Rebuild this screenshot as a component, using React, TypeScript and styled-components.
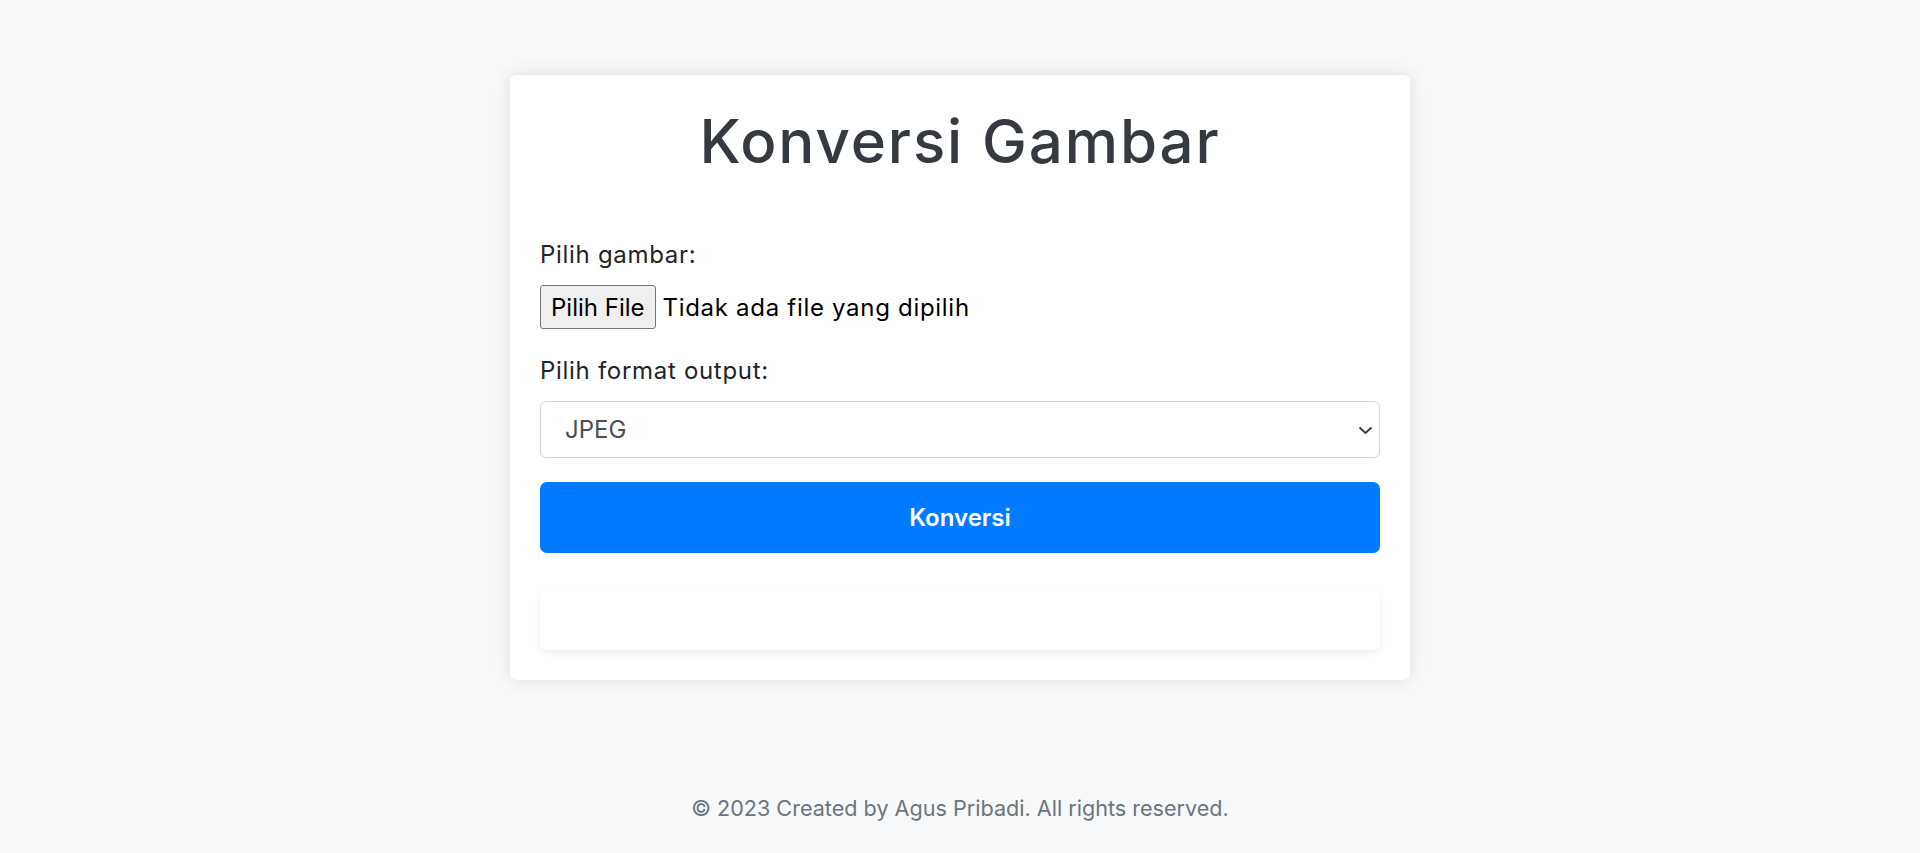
import React from "react";
import styled, { createGlobalStyle } from "styled-components";

const GlobalStyle = createGlobalStyle`
  html, body {
    margin: 0;
    padding: 0;
    background: #f8f9fa;
    font-family: Inter, "Noto Sans", "Liberation Sans", sans-serif;
    color: #212529;
  }
  * { box-sizing: border-box; }
`;

const Page = styled.div`
  min-height: 100vh;
  display: flex;
  flex-direction: column;
  align-items: center;
`;

const Card = styled.main`
  margin-top: 75px;
  width: 900px;
  padding: 30px;
  background: #ffffff;
  border-radius: 7px;
  box-shadow: 0 0 18px rgba(0, 0, 0, 0.12);
  display: flex;
  flex-direction: column;
`;

const Title = styled.h1`
  margin: 0 0 60px;
  font-size: 60px;
  line-height: 72px;
  font-weight: 500;
  letter-spacing: 1.9px;
  text-align: center;
  color: #343a40;
`;

const Field = styled.div`
  display: flex;
  flex-direction: column;
  margin-bottom: 24px;
`;

const Label = styled.label`
  font-size: 24px;
  line-height: 36px;
  letter-spacing: 0.7px;
  color: #212529;
  margin-bottom: 12px;
`;

const FileRow = styled.div`
  display: flex;
  align-items: center;
  gap: 7px;
  height: 44px;
`;

const FileButton = styled.button`
  height: 44px;
  padding: 0 10px;
  border: 1px solid #767676;
  border-radius: 3px;
  background: #efefef;
  color: #000;
  font-family: inherit;
  font-size: 24px;
  cursor: pointer;
`;

const FileName = styled.span`
  font-size: 24px;
  letter-spacing: 0.7px;
  color: #000;
`;

const SelectWrap = styled.div`
  position: relative;
  height: 57px;
`;

const Select = styled.select`
  width: 100%;
  height: 57px;
  appearance: none;
  -webkit-appearance: none;
  padding: 0 24px;
  border: 1.5px solid #ced4da;
  border-radius: 6px;
  background: #fff;
  color: #495057;
  font-family: inherit;
  font-size: 24px;
`;

const Chevron = styled.svg`
  position: absolute;
  right: 7px;
  top: 25px;
  pointer-events: none;
`;

const PrimaryButton = styled.button`
  height: 71px;
  width: 100%;
  border: none;
  border-radius: 7px;
  background: #007bff;
  color: #fff;
  font-family: inherit;
  font-size: 24px;
  font-weight: 600;
  cursor: pointer;
`;

const Result = styled.div`
  margin-top: 37px;
  height: 60px;
  border-radius: 7px;
  background: #fff;
  box-shadow: 0 3px 7px rgba(0, 0, 0, 0.08);
`;

const Footer = styled.footer`
  margin-top: auto;
  padding-bottom: 29px;
  font-size: 21.6px;
  line-height: 32px;
  color: #6c757d;
  text-align: center;
`;

export default function App() {
  return (
    <>
      <GlobalStyle />
      <Page>
        <Card>
          <Title>Konversi Gambar</Title>
          <Field>
            <Label>Pilih gambar:</Label>
            <FileRow>
              <FileButton type="button">Pilih File</FileButton>
              <FileName>Tidak ada file yang dipilih</FileName>
            </FileRow>
          </Field>
          <Field>
            <Label htmlFor="format">Pilih format output:</Label>
            <SelectWrap>
              <Select id="format" defaultValue="jpeg">
                <option value="jpeg">JPEG</option>
                <option value="png">PNG</option>
                <option value="webp">WEBP</option>
              </Select>
              <Chevron width="15" height="9" viewBox="0 0 15 9">
                <path d="M1.5 1.5 L7.5 7 L13.5 1.5" fill="none" stroke="#3c3c3c" strokeWidth="2" />
              </Chevron>
            </SelectWrap>
          </Field>
          <PrimaryButton type="button">Konversi</PrimaryButton>
          <Result />
        </Card>
        <Footer>© 2023 Created by Agus Pribadi. All rights reserved.</Footer>
      </Page>
    </>
  );
}
